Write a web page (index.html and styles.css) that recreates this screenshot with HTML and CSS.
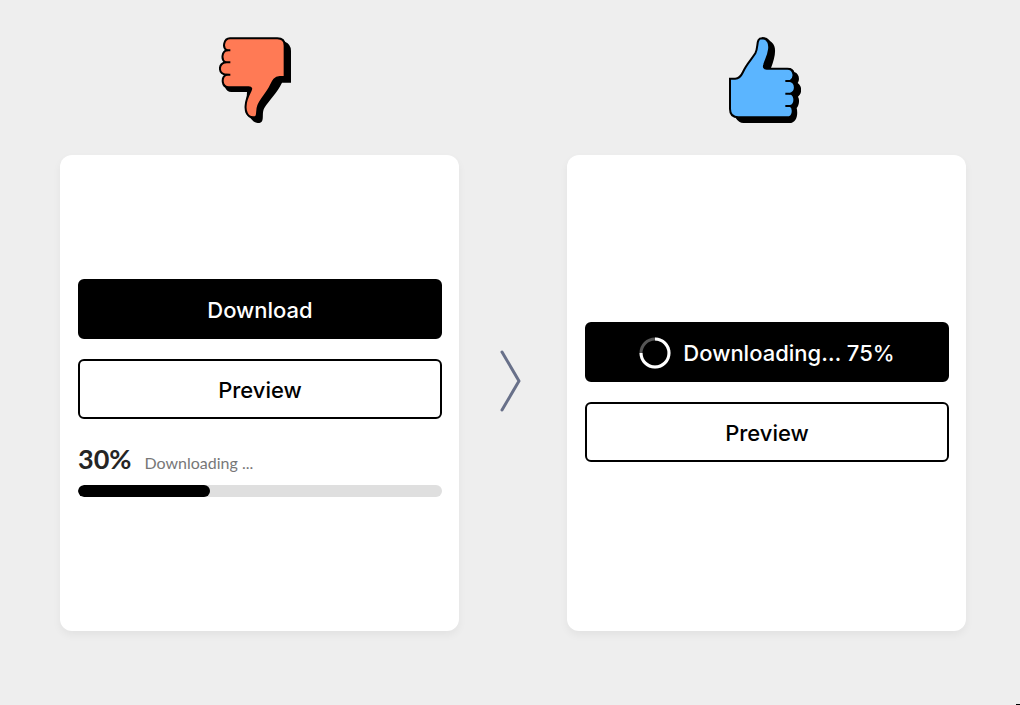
FILE: index.html
```html
<!DOCTYPE html>
<html lang="en">
<head>
<meta charset="utf-8">
<meta name="viewport" content="width=device-width, initial-scale=1">
<title>Download button feedback</title>
<link rel="stylesheet" href="styles.css">
</head>
<body>
<main class="comparison">
  <section class="example">
    <svg class="thumb thumb-down" viewBox="27 27 216 258" role="img" aria-label="Thumbs down">
      <path d="M62 31H204Q217 31 225 41Q243 49 243 68V164H216C201 195 178 216 163 240C155 254 162 272 155 281C149 287 137 286 130 280L107 255L111 192H64Q50 192 45 178Z" fill="#000"/>
      <path class="outline down" d="M60 31H202Q224 31 224 53V147H209C195 147 189 157 182 173C174 192 154 211 145 232C137 252 148 268 129 268C112 267 105 250 107 232C108 214 115 202 121 190C125 182 125 178 116 178H57C34 178 33 148 49 140C24 138 24 109 46 103C33 95 35 71 51 67C36 59 41 32 60 31Z"/>
      <path class="detail" d="M50 67H61M45 103H61M48 140H61"/>
    </svg>
    <div class="card">
      <button class="button primary" type="button">Download</button>
      <button class="button secondary" type="button">Preview</button>
      <div class="status">
        <strong class="percent">30%</strong>
        <label class="caption" for="download-progress">Downloading ...</label>
      </div>
      <progress class="bar" id="download-progress" max="364" value="132"></progress>
    </div>
  </section>

  <svg class="arrow" viewBox="0 0 22 62" aria-hidden="true">
    <path d="M3 2L20 31L3 60"/>
  </svg>

  <section class="example">
    <svg class="thumb thumb-up" viewBox="27 27 216 258" role="img" aria-label="Thumbs up">
      <path d="M126 28C146 27 146 38 155 43C173 57 164 91 153 120H207Q219 121 223 132C238 137 240 155 233 165C247 174 247 196 234 206C241 218 235 235 230 240C235 261 229 285 208 285H70Q57 285 47 270Z" fill="#000"/>
      <path class="outline up" d="M30 152H44C58 153 64 143 69 132C79 109 94 95 106 76C117 55 106 31 127 31C143 32 150 47 147 65C145 83 137 95 133 109C130 117 132 122 140 122H202C223 122 226 151 211 159C228 164 230 190 212 197C227 203 227 229 211 234C222 241 221 268 202 268H55Q30 268 30 243Z"/>
      <path class="detail" d="M196 159H212M196 197H212M196 234H212"/>
    </svg>
    <div class="card">
      <button class="button primary" type="button">
        <svg class="spinner" viewBox="0 0 32 32" aria-hidden="true">
          <circle class="track" cx="16" cy="16" r="14"/>
          <path d="M16 2A14 14 0 1 1 2 16"/>
        </svg>
        <span>Downloading… 75%</span>
      </button>
      <button class="button secondary" type="button">Preview</button>
    </div>
  </section>
</main>
</body>
</html>
```

FILE: styles.css
```css
* {
  box-sizing: border-box;
}

body {
  position: relative;
  min-height: 100vh;
  margin: 0;
  background: #eee;
  font-family: Inter, "Liberation Sans", sans-serif;
}

body::after {
  position: absolute;
  right: 0;
  bottom: 0;
  width: 4px;
  height: 1px;
  background: #000;
  content: "";
}

.comparison {
  display: grid;
  grid-template-columns: 1fr 108px 1fr;
  min-height: 100vh;
  padding: 37px 54px 74px 60px;
}

.example {
  display: flex;
  flex-direction: column;
  gap: 32px;
}

.thumb {
  width: 72px;
  height: 86px;
  align-self: center;
}

.thumb-down {
  margin-right: 10px;
}

.thumb-up {
  margin-right: 4px;
}

.outline {
  stroke: #000;
  stroke-width: 6;
}

.down {
  fill: #ff7a55;
}

.up {
  fill: #5bb5ff;
}

.detail {
  fill: none;
  stroke: #000;
  stroke-width: 6;
}

.card {
  display: flex;
  flex: 1;
  flex-direction: column;
  justify-content: center;
  padding: 0 17px 2px 18px;
  border-radius: 12px;
  background: #fff;
  box-shadow: 0 4px 8px rgb(0 0 0 / 5%);
}

.button {
  display: flex;
  align-items: center;
  justify-content: center;
  gap: 12px;
  width: 100%;
  height: 60px;
  padding: 2px 0 0;
  border: 2px solid #000;
  border-radius: 6px;
  font: 500 22px/28px Inter, "Liberation Sans", sans-serif;
}

.primary {
  margin-bottom: 20px;
  background: #000;
  color: #fff;
}

.secondary {
  background: #fff;
  color: #000;
}

.spinner {
  width: 32px;
  height: 32px;
  fill: none;
  stroke: #fff;
  stroke-width: 3;
}

.track {
  stroke: #555;
}

.status {
  display: flex;
  align-items: baseline;
  gap: 13px;
  margin: 22px 0 4px;
  font-family: Lato, "Liberation Sans", sans-serif;
  line-height: 36px;
}

.percent {
  color: #252525;
  font-size: 27px;
  font-weight: 700;
}

.caption {
  color: #777;
  font-size: 16px;
}

.bar {
  display: block;
  width: 100%;
  height: 12px;
  margin-bottom: 8px;
  overflow: hidden;
  border: 0;
  border-radius: 6px;
  background: #dfdfdf;
  appearance: none;
}

.bar::-webkit-progress-bar {
  background: #dfdfdf;
}

.bar::-webkit-progress-value {
  border-radius: 6px;
  background: #000;
}

.arrow {
  width: 22px;
  height: 62px;
  margin: 313px 0 0 40px;
  fill: none;
  stroke: #687089;
  stroke-width: 3;
  stroke-linecap: round;
  stroke-linejoin: round;
}
```
